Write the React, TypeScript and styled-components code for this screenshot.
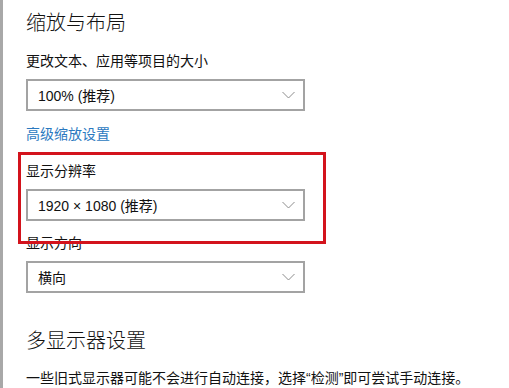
import React from "react";
import styled, { createGlobalStyle } from "styled-components";

const Global = createGlobalStyle`
  html, body { margin: 0; padding: 0; background: #ffffff; }
  body { font-family: "Liberation Sans", "Noto Sans CJK SC", sans-serif; overflow: hidden; }
`;

const Page = styled.div`
  position: relative;
  width: 509px;
  height: 388px;
  box-sizing: border-box;
  border-left: 3px solid #a8a8a8;
  padding: 8px 0 0 23px;
  display: flex;
  flex-direction: column;
  overflow: hidden;
  color: #000;
`;

const Heading = styled.h2<{ $top?: number }>`
  margin: ${(p) => p.$top ?? 0}px 0 0 0;
  font-size: 20px;
  line-height: 28px;
  font-weight: 300;
  font-family: "Noto Sans CJK SC", sans-serif;
  color: #111;
`;

const Label = styled.div<{ $top: number }>`
  margin-top: ${(p) => p.$top}px;
  font-size: 14px;
  line-height: 20px;
  color: #111;
  font-family: "Liberation Sans", "Noto Sans CJK SC", sans-serif;
`;

const Select = styled.div`
  margin-top: 8px;
  width: 279px;
  height: 32px;
  box-sizing: border-box;
  border: 2px solid #a3a3a3;
  background: #fff;
  display: flex;
  align-items: center;
  justify-content: space-between;
  padding: 0 8px 0 10px;
  font-size: 14px;
  font-family: "Liberation Sans", "Noto Sans CJK SC", sans-serif;
  color: #111;
`;

const Link = styled.div`
  margin-top: 12px;
  font-size: 14px;
  line-height: 20px;
  color: #2b79bf;
  font-family: "Noto Sans CJK SC", sans-serif;
`;

const Para = styled.div`
  margin-top: 14px;
  font-size: 14px;
  line-height: 20px;
  color: #111;
  white-space: nowrap;
  font-family: "Liberation Sans", "Noto Sans CJK SC", sans-serif;
`;

const Highlight = styled.div`
  position: absolute;
  left: 15px;
  top: 152px;
  width: 308px;
  height: 92px;
  box-sizing: border-box;
  border: 3px solid #d3131c;
  pointer-events: none;
`;

const Chevron = () => (
  <svg width="13" height="8" viewBox="0 0 13 8">
    <polyline points="0.5,1 6.5,7 12.5,1" fill="none" stroke="#8c8c8c" strokeWidth="1" />
  </svg>
);

const Dropdown = ({ value }: { value: string }) => (
  <Select>
    <span>{value}</span>
    <Chevron />
  </Select>
);

export default function App() {
  return (
    <>
      <Global />
      <Page>
        <Heading>缩放与布局</Heading>
        <Label $top={15}>更改文本、应用等项目的大小</Label>
        <Dropdown value="100% (推荐)" />
        <Link>高级缩放设置</Link>
        <Label $top={18}>显示分辨率</Label>
        <Dropdown value="1920 × 1080 (推荐)" />
        <Label $top={12}>显示方向</Label>
        <Dropdown value="横向" />
        <Heading $top={33}>多显示器设置</Heading>
        <Para>一些旧式显示器可能不会进行自动连接，选择“检测”即可尝试手动连接。</Para>
        <Highlight />
      </Page>
    </>
  );
}
